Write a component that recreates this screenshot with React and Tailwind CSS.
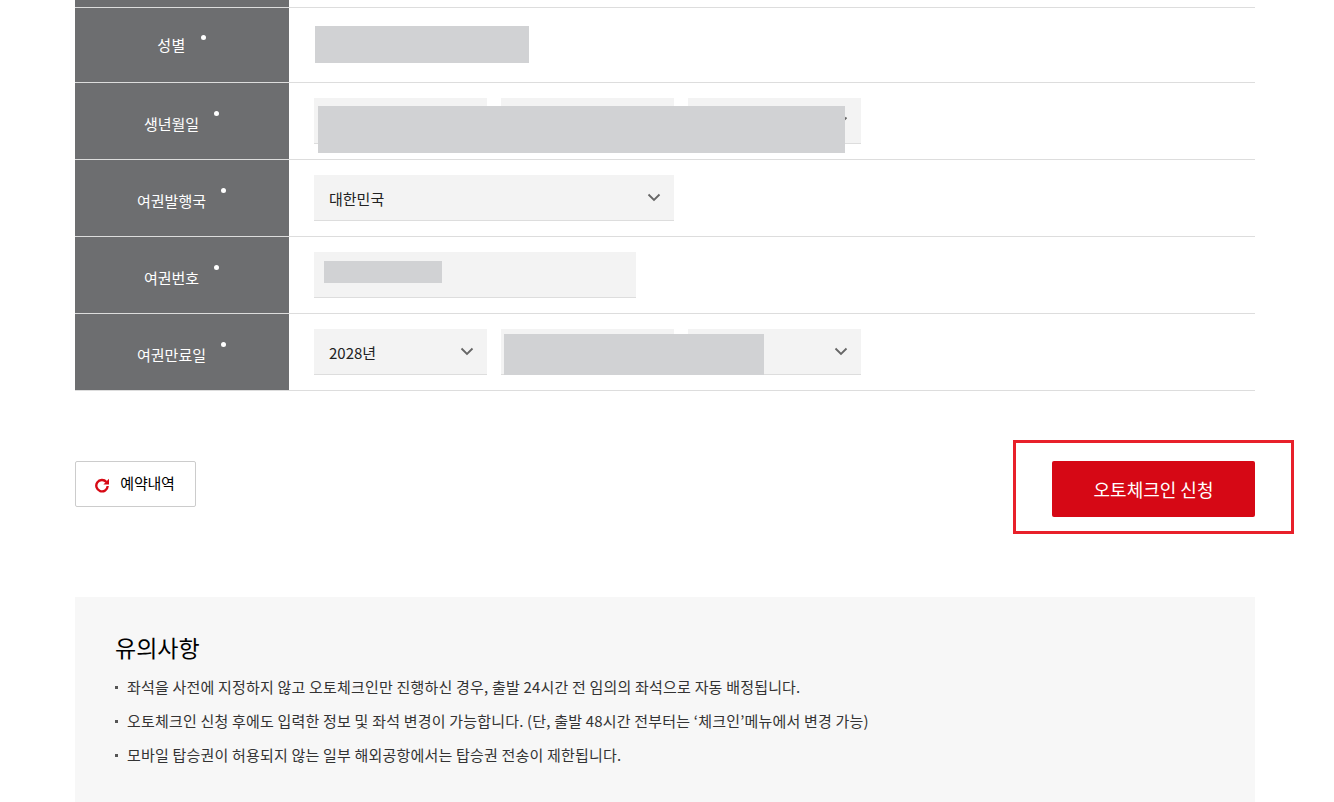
import React from "react";

const fontStack = `"Noto Sans CJK KR", "Noto Sans", sans-serif`;

const Chevron = () => (
  <svg width="14" height="9" viewBox="0 0 14 9" fill="none" className="text-[#666]">
    <path d="M1.5 1.5 7 7l5.5-5.5" stroke="currentColor" strokeWidth="1.8" />
  </svg>
);

const Select = ({ value, width = "w-[173px]" }) => (
  <div className={`flex h-[46px] ${width} items-center justify-between border-b border-[#ddd] bg-[#f3f3f3] pl-[15px] pr-[13px] text-[15px] text-[#222]`}>
    <span className="pt-[3px]">{value}</span>
    <Chevron />
  </div>
);

const Row = ({ label, children, rowHeight = "h-[77px]", textClass = "pt-[4px]" }) => (
  <div className={`flex ${rowHeight} border-b border-[#ddd]`}>
    <div className="flex w-[214px] shrink-0 items-center justify-center bg-[#6d6e70] pr-[1px] pt-[3px] text-[15px] text-white">
      <span className={textClass}>{label}</span>
      <span className="mb-[18px] ml-[15px] size-[5px] rounded-full bg-white" />
    </div>
    <div className="relative flex flex-1 items-center gap-[14px] pl-[25px]">{children}</div>
  </div>
);

const notices = [
  "좌석을 사전에 지정하지 않고 오토체크인만 진행하신 경우, 출발 24시간 전 임의의 좌석으로 자동 배정됩니다.",
  "오토체크인 신청 후에도 입력한 정보 및 좌석 변경이 가능합니다. (단, 출발 48시간 전부터는 ‘체크인’메뉴에서 변경 가능)",
  "모바일 탑승권이 허용되지 않는 일부 해외공항에서는 탑승권 전송이 제한됩니다.",
];

export default function App() {
  return (
    <div className="h-[802px] w-[1334px] overflow-hidden bg-white" style={{ fontFamily: fontStack }}>
      <div className="ml-[75px] w-[1180px]">
        {/* 입력 폼 */}
        <div>
          <div className="flex h-[8px] border-b border-[#ddd]">
            <div className="w-[214px] bg-[#6d6e70]" />
          </div>
          <Row label="성별" rowHeight="h-[75px]" textClass="pb-[2px] tracking-[0.5px]">
            <div className="mb-[2px] h-[37px] w-[214px] translate-x-[1px] bg-[#d1d2d4]" />
          </Row>
          <Row label="생년월일">
            <Select value="" />
            <Select value="" />
            <Select value="" />
            <div className="absolute left-[29px] top-[23px] h-[47px] w-[527px] bg-[#d1d2d4]" />
          </Row>
          <Row label="여권발행국">
            <Select value="대한민국" width="w-[360px]" />
          </Row>
          <Row label="여권번호">
            <div className="flex h-[46px] w-[322px] items-center border-b border-[#ddd] bg-[#f3f3f3] pl-[10px]">
              <div className="mb-[6px] h-[22px] w-[118px] bg-[#d1d2d4]" />
            </div>
          </Row>
          <Row label="여권만료일">
            <Select value="2028년" />
            <Select value="" />
            <Select value="" />
            <div className="absolute left-[215px] top-[20px] h-[41px] w-[260px] bg-[#d1d2d4]" />
          </Row>
        </div>

        {/* 버튼 영역 */}
        <div className="mt-[70px] flex items-start justify-between">
          <button className="flex h-[46px] w-[121px] items-center justify-center gap-[10px] rounded-[2px] border border-[#ccc] bg-white pr-[2px] pt-[2px] text-[15px] tracking-[-0.2px] text-black">
            <svg width="16" height="16" viewBox="0 0 16 16" fill="none">
              <path d="M12.4 5A5.7 5.7 0 1 0 13.7 9" stroke="#d70a15" strokeWidth="2.4" />
              <path d="M15 1.8v5.6H9.4z" fill="#d70a15" />
            </svg>
            <span className="mb-[3px]">예약내역</span>
          </button>
          <div className="relative">
            <button className="h-[56px] w-[203px] rounded-[2px] bg-[#d60815] text-[18px] text-white">오토체크인 신청</button>
            <div className="absolute -left-[39px] -top-[21px] h-[94px] w-[281px] border-[3px] border-[#e8202a]" />
          </div>
        </div>

        {/* 유의사항 */}
        <div className="mt-[80px] h-[205px] bg-[#f7f7f7] px-10 pt-[32px]">
          <h2 className="text-[23px] leading-[36px] text-black">유의사항</h2>
          <ul className="mt-[5px] flex flex-col">
            {notices.map((text) => (
              <li key={text} className="flex h-[34px] items-center text-[15px] tracking-[0.19px] text-[#333]">
                <span className="mr-[9px] size-[3px] shrink-0 bg-[#555]" />
                {text}
              </li>
            ))}
          </ul>
        </div>
      </div>
    </div>
  );
}
